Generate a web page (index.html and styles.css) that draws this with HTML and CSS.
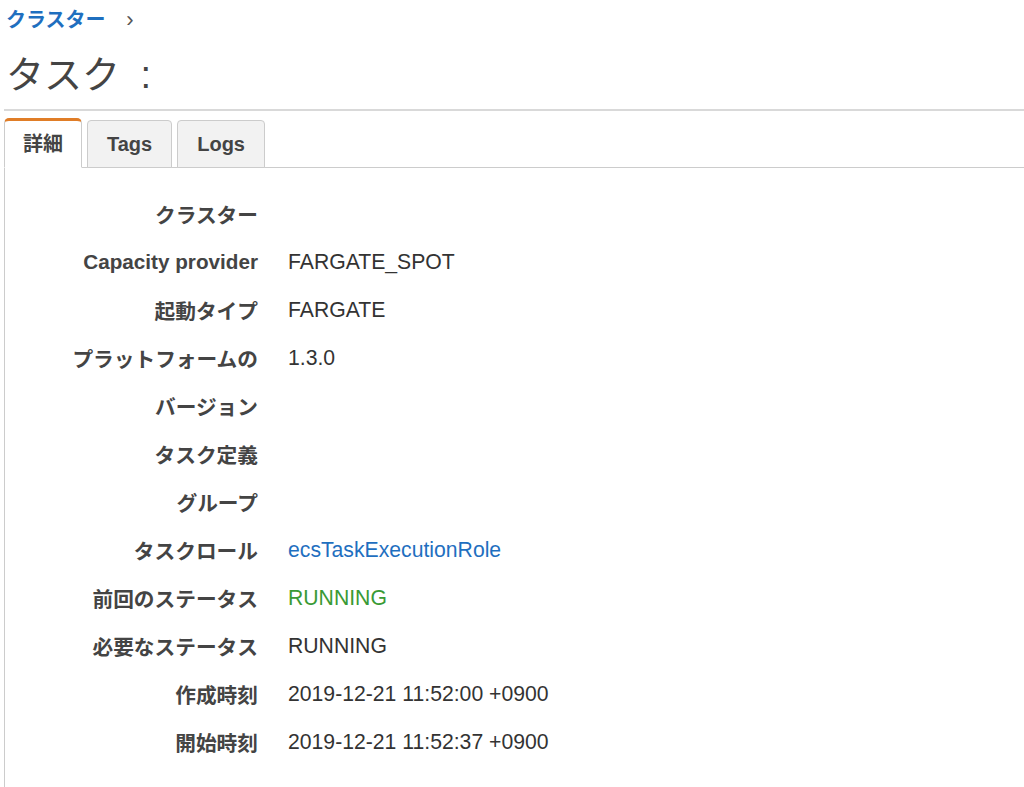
FILE: index.html
```html
<!DOCTYPE html>
<html lang="ja">
<head>
  <meta charset="UTF-8">
  <meta name="viewport" content="width=device-width, initial-scale=1.0">
  <title>タスク</title>
  <link rel="stylesheet" href="styles.css">
</head>
<body>
  <div class="page">
    <div class="crumbs">
      <a href="#" class="crumb-link">クラスター</a>
      <span class="crumb-sep">›</span>
    </div>
    <h1 class="title">タスク :</h1>

    <div class="tabs">
      <div class="tab active">詳細</div>
      <div class="tab">Tags</div>
      <div class="tab">Logs</div>
    </div>

    <div class="panel">
      <div class="row"><div class="label">クラスター</div><div class="value"></div></div>
      <div class="row"><div class="label">Capacity provider</div><div class="value">FARGATE_SPOT</div></div>
      <div class="row"><div class="label">起動タイプ</div><div class="value">FARGATE</div></div>
      <div class="row"><div class="label">プラットフォームの</div><div class="value">1.3.0</div></div>
      <div class="row"><div class="label">バージョン</div><div class="value"></div></div>
      <div class="row"><div class="label">タスク定義</div><div class="value"></div></div>
      <div class="row"><div class="label">グループ</div><div class="value"></div></div>
      <div class="row"><div class="label">タスクロール</div><div class="value"><a href="#" class="link">ecsTaskExecutionRole</a></div></div>
      <div class="row"><div class="label">前回のステータス</div><div class="value ok">RUNNING</div></div>
      <div class="row"><div class="label">必要なステータス</div><div class="value">RUNNING</div></div>
      <div class="row"><div class="label">作成時刻</div><div class="value">2019-12-21 11:52:00 +0900</div></div>
      <div class="row"><div class="label">開始時刻</div><div class="value">2019-12-21 11:52:37 +0900</div></div>
    </div>
  </div>
</body>
</html>
```

FILE: styles.css
```css
body {
  margin: 0;
  font-family: "Liberation Sans", "Noto Sans CJK JP", sans-serif;
  color: #444;
  background: #fff;
}
.page {
  padding: 8px 0 0 4px;
}
.crumbs {
  height: 24px;
  line-height: 24px;
  padding-left: 2px;
  font-size: 20px;
}
.crumb-link {
  color: #1f6fbf;
  font-weight: bold;
  text-decoration: none;
}
.crumb-sep {
  margin-left: 15px;
  color: #555;
  font-size: 22px;
}
.title {
  margin: 18px 0 0;
  padding: 0 0 9px 2px;
  font-size: 38px;
  font-weight: normal;
  line-height: 50px;
  word-spacing: 10px;
  color: #444;
  border-bottom: 2px solid #d9d9d9;
}
.tabs {
  display: flex;
  gap: 5px;
  margin-top: 7px;
  margin-bottom: -1px;
  align-items: flex-end;
}
.tab {
  height: 46px;
  line-height: 46px;
  padding: 0 19px;
  font-size: 20px;
  font-weight: bold;
  color: #444;
  background: #f2f2f2;
  border: 1px solid #ccc;
  border-radius: 4px 4px 0 0;
}
.tab.active {
  height: 46px;
  padding: 0 18px;
  background: #fff;
  border-top: 3px solid #e07d27;
  border-bottom: 1px solid #fff;
  border-radius: 5px 5px 0 0;
}
.panel {
  border-top: 1px solid #ccc;
  border-left: 1px solid #ccc;
  padding-top: 22px;
  min-height: 598px;
}
.row {
  display: grid;
  grid-template-columns: 253px 1fr;
  column-gap: 30px;
  height: 48px;
  align-items: center;
  font-size: 20.7px;
}
.label {
  text-align: right;
  font-weight: bold;
  color: #444;
}
.value {
  color: #333;
  font-size: 21.2px;
}
.link {
  color: #1f6fbf;
  text-decoration: none;
}
.ok {
  color: #3a9a35;
}
```
